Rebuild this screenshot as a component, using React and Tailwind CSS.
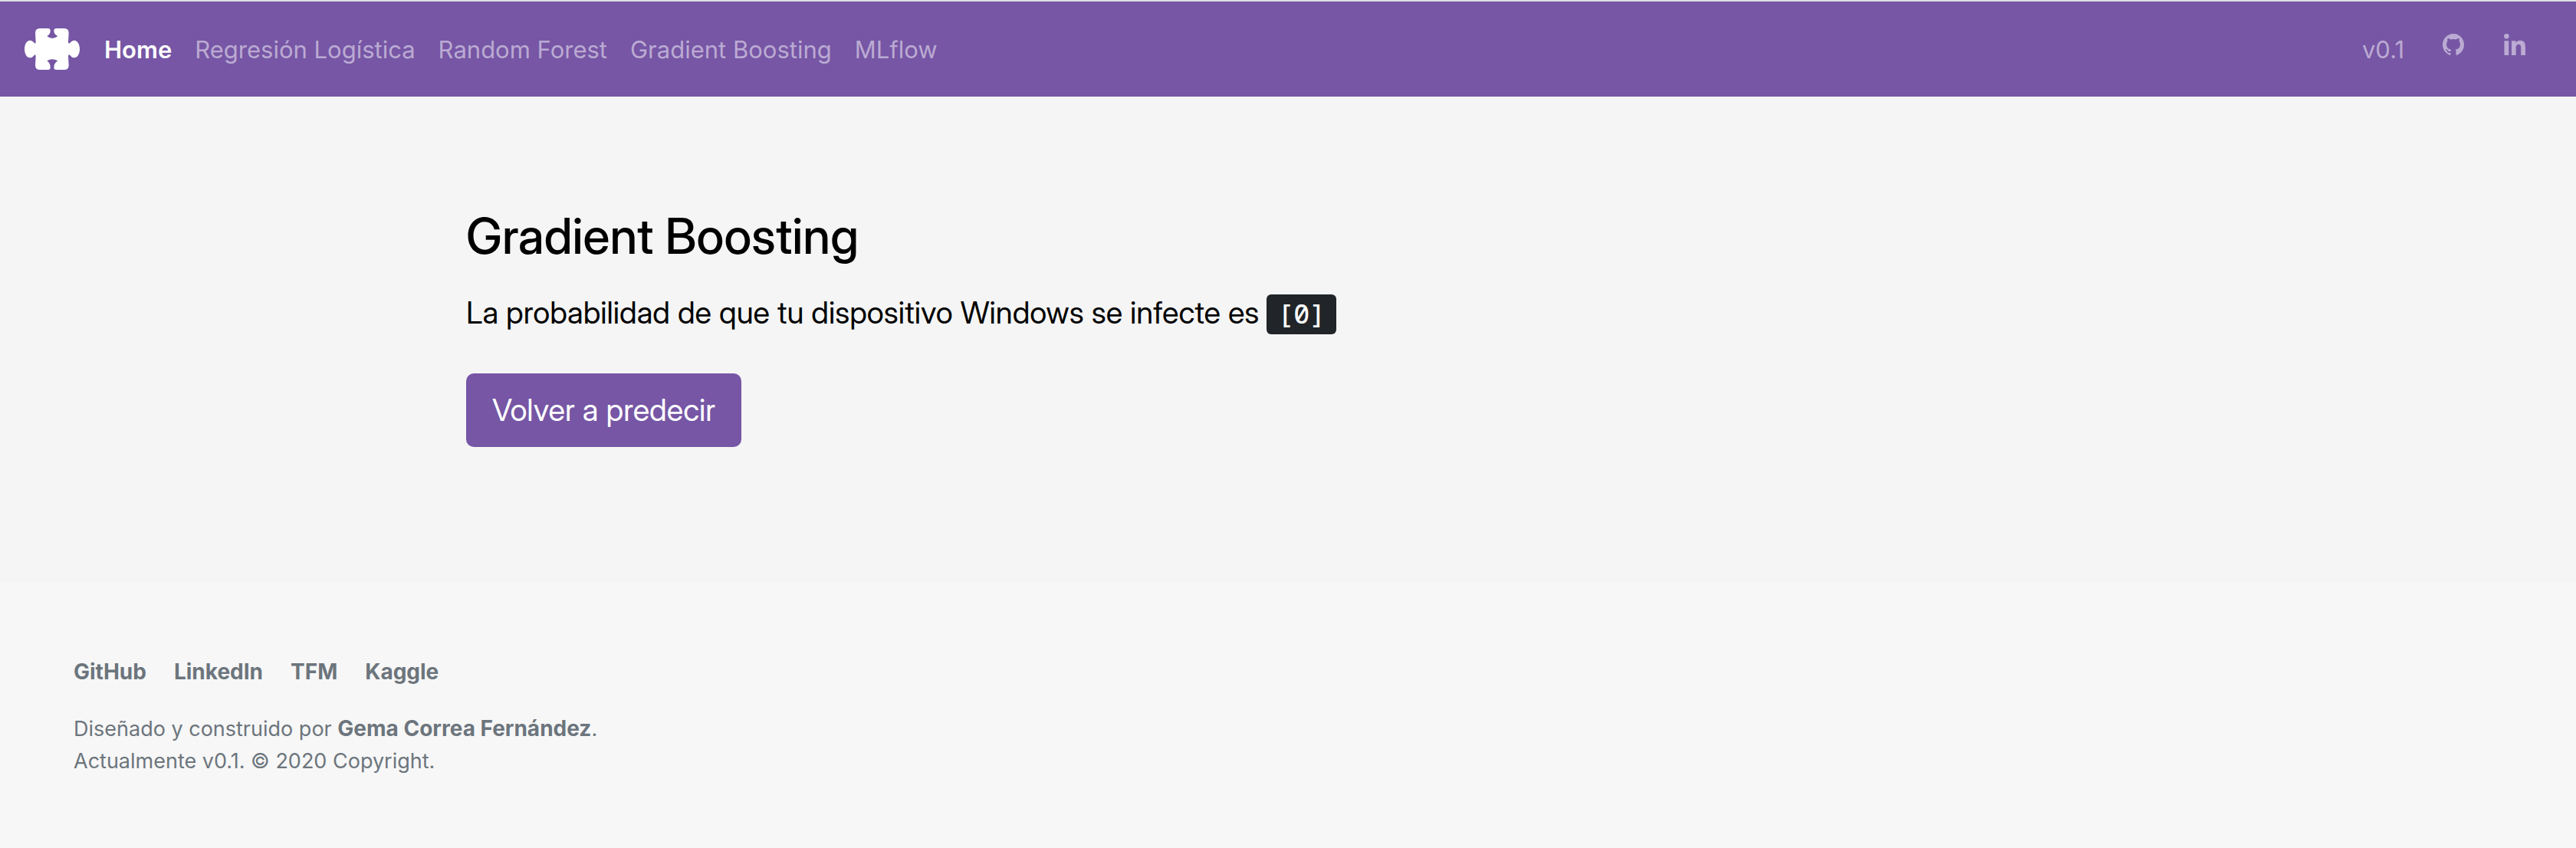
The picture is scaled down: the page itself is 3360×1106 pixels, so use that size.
const SANS = "font-['Inter','Liberation_Sans',sans-serif]";

function PuzzleLogo() {
  return (
    <svg viewBox="0 0 216 162" className="h-[54px] w-[72px]" fill="#fff" aria-hidden="true">
      <path d="M60 0H92Q101 0 101 9C101 20 97 25 88 31Q108 47 130 31C120 25 115 20 115 9Q115 0 124 0H155Q173 0 173 19L171 54Q172 61 177 58C183 51 188 47 195 47C207 47 216 62 216 81C216 100 207 115 195 115C188 115 183 111 177 104Q172 101 171 108L173 143Q173 162 155 162H124Q115 162 115 153C115 142 120 134 130 127Q108 115 88 127C97 134 101 142 101 153Q101 162 92 162H60Q42 162 42 143L44 108Q43 101 39 104C33 111 28 115 21 115C9 115 0 100 0 81C0 62 9 47 21 47C28 47 33 51 39 58Q43 61 44 54L42 19Q42 0 60 0Z" />
    </svg>
  );
}

function GitHubIcon() {
  return (
    <svg viewBox="0 0 499.36 487" preserveAspectRatio="none" className="h-7 w-7" fill="currentColor" aria-hidden="true">
      <path d="M249.68 0C111.8 0 0 111.8 0 249.7c0 110.2 71.5 203.900 170.800 236.900 12.500 2.300 17-5.400 17-12 0-5.900-.2-21.600-.3-42.400-69.500 15.100-84.100-33.500-84.100-33.500-11.300-28.800-27.700-36.500-27.700-36.500-22.700-15.500 1.700-15.200 1.700-15.200 25.100 1.800 38.300 25.800 38.300 25.800 22.300 38.200 58.500 27.200 72.700 20.800 2.300-16.200 8.700-27.200 15.900-33.400-55.500-6.300-113.700-27.700-113.700-123.400 0-27.300 9.700-49.500 25.700-67-2.600-6.300-11.100-31.700 2.400-66.100 0 0 20.900-6.700 68.600 25.600a239 239 0 0 1 125 0c47.700-32.300 68.600-25.600 68.600-25.600 13.600 34.400 5.100 59.800 2.500 66.100 16 17.500 25.600 39.700 25.600 67 0 95.900-58.400 117-114 123.200 9 7.700 17 22.900 17 46.200 0 33.400-.3 60.300-.3 68.500 0 6.600 4.500 14.400 17.100 12C428 453.400 499.400 359.800 499.400 249.700 499.400 111.800 387.600 0 249.700 0Z" />
    </svg>
  );
}

function LinkedInIcon() {
  return (
    <svg viewBox="0 0 448 448" className="h-7 w-7" fill="currentColor" aria-hidden="true">
      <path d="M100.280 448H7.400V148.900h92.880zM53.790 108.100C24.090 108.100 0 83.500 0 53.800a53.790 53.790 0 0 1 107.580 0c0 29.700-24.100 54.300-53.790 54.300zM447.900 448h-92.680V302.400c0-34.700-.7-79.200-48.290-79.200-48.290 0-55.690 37.700-55.690 76.700V448h-92.780V148.900h89.080v40.800h1.300c12.400-23.500 42.690-48.300 87.880-48.300 94 0 111.280 61.900 111.280 142.300V448z" />
    </svg>
  );
}

const navLinks = ["Regresión Logística", "Random Forest", "Gradient Boosting", "MLflow"];
const footerLinks = ["GitHub", "LinkedIn", "TFM", "Kaggle"];

export default function App() {
  return (
    <div className={`flex min-h-screen flex-col bg-[#f7f7f7] text-black ${SANS}`}>
      <header className="flex items-center border-t-2 border-[#dcdce2] bg-[#7656a5] px-8 py-[35px] text-[31px] leading-[48px] text-[#bbaad2]">
        <a href="#" aria-label="Inicio" className="mr-8">
          <PuzzleLogo />
        </a>
        <nav className="flex flex-1 items-center gap-[30px] pt-[2px]">
          <a href="#" className="font-semibold text-white">Home</a>
          {navLinks.map((t) => (
            <a key={t} href="#">{t}</a>
          ))}
        </nav>
        <div className="flex items-center pr-[34px]">
          <span className="mr-[50px] pt-[2px]">v0.1</span>
          <a href="#" aria-label="GitHub" className="mr-[52px] pb-3">
            <GitHubIcon />
          </a>
          <a href="#" aria-label="LinkedIn" className="pb-3">
            <LinkedInIcon />
          </a>
        </div>
      </header>

      <main className="bg-[#f5f5f5] pt-36 pb-44 font-['Inter_Display','Inter',sans-serif]">
        <div className="ml-[16.6667%] px-12">
          <h1 className="text-[64px] leading-[76px] font-medium">Gradient Boosting</h1>
          <p className="mt-8 text-[40px] leading-[60px]">
            La probabilidad de que tu dispositivo Windows se infecte es{" "}
            <code className="rounded-md bg-[#212529] px-[14px] pt-px pb-1 font-['Noto_Sans_Mono','Noto_Sans_CJK_SC',monospace] text-[35px] font-medium text-white">[0]</code>
          </p>
          <button type="button" className="mt-12 h-24 rounded-[10px] bg-[#7656a5] px-[34px] text-[40px] leading-[60px] text-white">
            Volver a predecir
          </button>
        </div>
      </main>

      <footer className="p-24 text-[27px] leading-[42px] text-[#6c757d]">
        <ul className="flex gap-9 text-[28px] font-bold">
          {footerLinks.map((t) => (
            <li key={t}><a href="#">{t}</a></li>
          ))}
        </ul>
        <p className="mt-8">
          Diseñado y construido por <a href="#" className="text-[28px] font-bold">Gema Correa Fernández</a>.
        </p>
        <p>Actualmente v0.1. © 2020 Copyright.</p>
      </footer>
    </div>
  );
}
